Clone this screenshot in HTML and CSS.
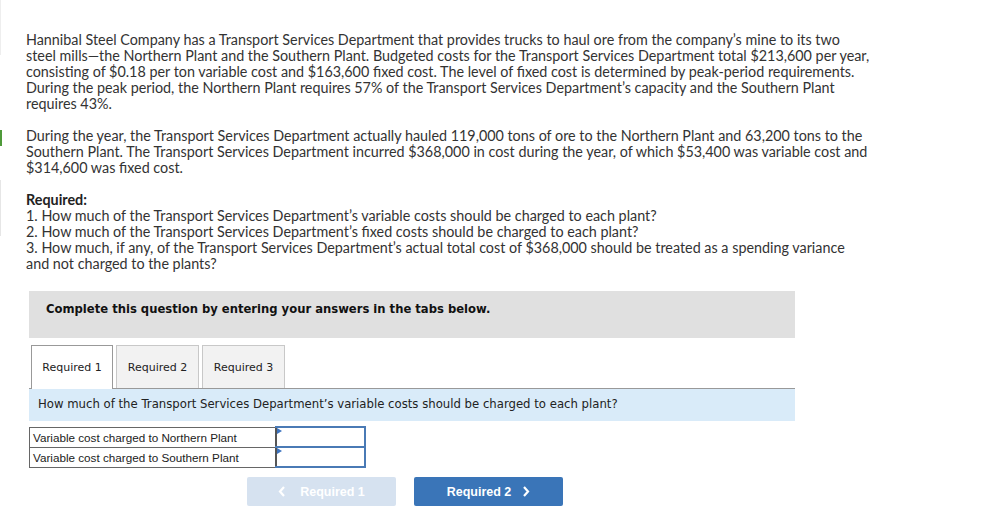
FILE: index.html
```html
<!DOCTYPE html>
<html>
<head>
<meta charset="utf-8">
<link rel="stylesheet" href="styles.css">
</head>
<body>
<div class="edge edge-a"></div>
<div class="edge edge-b"></div>
<div class="edge edge-c"></div>
<div class="page">
  <div class="problem">
    <p>Hannibal Steel Company has a Transport Services Department that provides trucks to haul ore from the company’s mine to its two<br>steel mills—the Northern Plant and the Southern Plant. Budgeted costs for the Transport Services Department total $213,600 per year,<br>consisting of $0.18 per ton variable cost and $163,600 fixed cost. The level of fixed cost is determined by peak-period requirements.<br>During the peak period, the Northern Plant requires 57% of the Transport Services Department’s capacity and the Southern Plant<br>requires 43%.</p>
    <p>During the year, the Transport Services Department actually hauled 119,000 tons of ore to the Northern Plant and 63,200 tons to the<br>Southern Plant. The Transport Services Department incurred $368,000 in cost during the year, of which $53,400 was variable cost and<br>$314,600 was fixed cost.</p>
    <p><b>Required:</b><br>1. How much of the Transport Services Department’s variable costs should be charged to each plant?<br>2. How much of the Transport Services Department’s fixed costs should be charged to each plant?<br>3. How much, if any, of the Transport Services Department’s actual total cost of $368,000 should be treated as a spending variance<br>and not charged to the plants?</p>
  </div>
  <div class="answer">
    <div class="banner">Complete this question by entering your answers in the tabs below.</div>
    <div class="tabs">
      <div class="tab active">Required 1</div>
      <div class="tab">Required 2</div>
      <div class="tab">Required 3</div>
    </div>
    <div class="prompt">How much of the Transport Services Department’s variable costs should be charged to each plant?</div>
    <table class="grid">
      <tr><td class="label">Variable cost charged to Northern Plant</td><td class="input"><span class="mark"></span></td></tr>
      <tr><td class="label">Variable cost charged to Southern Plant</td><td class="input"><span class="mark"></span></td></tr>
    </table>
    <div class="nav">
      <div class="btn disabled"><svg class="chev" width="8" height="11" viewBox="0 0 8 11"><polyline points="6,1 2,5.5 6,10" fill="none" stroke="#fff" stroke-width="2.2"/></svg>Required 1</div>
      <div class="btn primary">Required 2<svg class="chev right" width="8" height="11" viewBox="0 0 8 11"><polyline points="2,1 6,5.5 2,10" fill="none" stroke="#fff" stroke-width="2.2"/></svg></div>
    </div>
  </div>
</div>
</body>
</html>
```
FILE: styles.css
```css
html, body { margin: 0; padding: 0; background: #fff; }
body { position: relative; width: 1006px; height: 525px; overflow: hidden; }
.edge { position: absolute; left: 0; width: 2px; }
.edge-a { top: 0; height: 55px; background: #eeeeee; width: 1px; }
.edge-b { top: 130px; height: 16px; background: #4f9a3a; }
.edge-c { top: 180px; height: 56px; background: #e6e6e6; width: 1px; }

.page { padding: 32px 0 0 26px; }
.problem { width: 900px; font-family: Lato, "Open Sans", sans-serif; font-size: 14.35px; line-height: 16px; color: #333; white-space: nowrap; }
.problem p { margin: 0 0 16px 0; }
.problem b { font-weight: 700; color: #222; }

.answer { margin-left: 3px; width: 766px; margin-top: 19px; }
.banner { background: #e0e0e0; height: 47px; box-sizing: border-box; padding: 11px 0 0 17px; font-family: Verdana, "DejaVu Sans", sans-serif; font-weight: bold; font-size: 11.6px; color: #111; }
.tabs { display: flex; gap: 3px; margin-top: 7px; padding-left: 2px; border-bottom: 1px solid #999; height: 43px; }
.tab { width: 83px; height: 43px; box-sizing: border-box; border: 1px solid #c8c8c8; border-bottom: none; background: #f2f2f2; font-family: Verdana, "DejaVu Sans", sans-serif; font-size: 11px; color: #222; display: flex; align-items: center; justify-content: center; }
.tab.active { background: #fff; border-color: #999; height: 44px; margin-bottom: -1px; width: 82px; }
.prompt { background: #d9ebf9; height: 32px; box-sizing: border-box; padding: 8px 0 0 9px; font-family: Verdana, "DejaVu Sans", sans-serif; font-size: 11.7px; color: #222; }

.grid { border-collapse: collapse; margin-top: 5px; font-family: Arial, "Liberation Sans", sans-serif; font-size: 11.7px; color: #222; }
.grid td { height: 20px; padding: 0; box-sizing: border-box; }
.grid td.label { width: 246px; border: 1px solid #666; padding: 0 0 0 3px; }
.grid td.input { width: 89px; border: 2px solid #4a7ab5; border-left-color: #555; position: relative; }
.mark { position: absolute; left: 0; top: 0; width: 0; height: 0; border-top: 3px solid transparent; border-bottom: 3px solid transparent; border-left: 5px solid #3d74c0; }

.nav { display: flex; gap: 18px; margin: 9px 0 0 218px; }
.btn { width: 149px; height: 29px; border-radius: 2px; display: flex; align-items: center; justify-content: center; font-family: Arial, "Liberation Sans", sans-serif; font-weight: bold; font-size: 12.5px; color: #fff; }
.btn.disabled { background: #d6e2f0; }
.btn.primary { background: #3a75b8; }
.chev { margin-right: 14px; }
.chev.right { margin-right: 0; margin-left: 11px; }
```
